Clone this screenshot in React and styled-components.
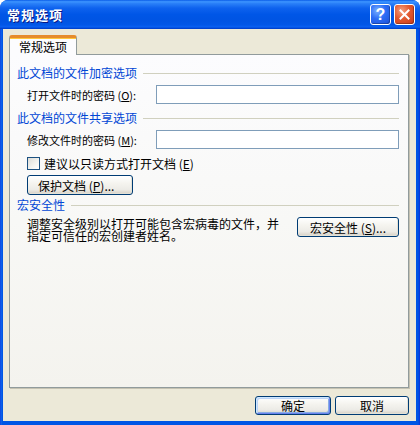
import React from 'react';
import styled, { createGlobalStyle } from 'styled-components';

const GlobalStyle = createGlobalStyle`
  html, body {
    margin: 0;
    padding: 0;
    background: #ffffff;
  }
  body {
    font-family: "Noto Sans CJK SC", "Liberation Sans", sans-serif;
    font-size: 12px;
  }
`;

const Window = styled.div`
  width: 420px;
  height: 425px;
  display: flex;
  flex-direction: column;
  background: linear-gradient(to right, #0831d9 0, #166aee 1px, #0055e5 2px, #0055e5 calc(100% - 2px), #0831d9 100%);
  border-radius: 8px 8px 0 0;
  overflow: hidden;
  box-sizing: border-box;
`;

const TitleBar = styled.div`
  height: 29px;
  flex: 0 0 29px;
  display: flex;
  align-items: center;
  padding: 0 5px 0 7px;
  background: linear-gradient(to bottom, #0a5ce8 0%, #3d95ff 6%, #2a80f8 12%, #0e62ee 28%, #0056e7 50%, #0054e3 72%, #0257e8 86%, #0a61f2 93%, #0047d6 97%, #003dc6 100%);
`;

const Title = styled.div`
  flex: 1;
  color: #ffffff;
  font-weight: bold;
  font-size: 13px;
  letter-spacing: 1px;
  text-shadow: 1px 1px 0 #0a1883;
`;

const CaptionButton = styled.div`
  width: 21px;
  height: 21px;
  box-sizing: border-box;
  border: 1px solid #ffffff;
  border-radius: 3px;
  margin-left: 3px;
  display: flex;
  align-items: center;
  justify-content: center;
  color: #ffffff;
  font-family: "Liberation Sans", sans-serif;
  font-weight: bold;
  font-size: 16px;
  background: ${p => p.$close
    ? 'radial-gradient(circle at 35% 30%, #f5a080 0%, #e2592f 45%, #c4381a 100%)'
    : 'radial-gradient(circle at 35% 30%, #7ab0ff 0%, #2d6df5 45%, #1a4fd6 100%)'};
  box-shadow: inset -1px -1px 0 rgba(0, 0, 0, 0.25);
`;

const Client = styled.div`
  flex: 1;
  margin: 0 4px 4px 3px;
  background: #ece9d8;
  display: flex;
  flex-direction: column;
  padding: 6px 7px 0 6px;
`;

const TabStrip = styled.div`
  display: flex;
  position: relative;
  z-index: 1;
`;

const Tab = styled.div`
  width: 68px;
  height: 20px;
  box-sizing: border-box;
  margin-bottom: -1px;
  padding: 2px 0 0 9px;
  border: 1px solid #919b9c;
  border-bottom: none;
  border-top: 3px solid #e68b2c;
  border-radius: 3px 3px 0 0;
  background: linear-gradient(to bottom, #ffc73c 0, #ffc73c 1px, #fcfcfe 1px);
  color: #000000;
  font-size: 12px;
  line-height: 14px;
`;

const Panel = styled.div`
  height: 334px;
  box-sizing: border-box;
  border: 1px solid #919b9c;
  box-shadow: 1px 1px 0 #c5c2b2;
  background: linear-gradient(to bottom, #fcfcfe 0%, #f8f8f6 50%, #f4f3ee 100%);
  display: flex;
  flex-direction: column;
  padding: 11px 9px 0 7px;
`;

const Group = styled.div`
  display: flex;
  align-items: center;
  height: 14px;
  margin-top: ${p => p.$top || 0}px;
  color: #0046d5;
  font-size: 12px;
  line-height: 14px;

  &::after {
    content: '';
    flex: 1;
    height: 1px;
    margin-left: 6px;
    background: #d0d0bf;
  }
`;

const FieldRow = styled.div`
  display: flex;
  align-items: center;
  margin-top: 5px;
  padding-left: 10px;
`;

const Label = styled.label`
  width: 129px;
  flex: 0 0 129px;
  font-size: 11px;
  color: #000000;
  white-space: nowrap;
`;

const Key = styled.span`
  text-decoration: underline;
`;

const TextBox = styled.div`
  flex: 1;
  height: 19px;
  box-sizing: border-box;
  border: 1px solid #7f9db9;
  background: #ffffff;
`;

const CheckRow = styled.div`
  display: flex;
  align-items: center;
  margin-top: 8px;
  padding-left: 10px;
  height: 13px;
  color: #000000;
`;

const CheckBox = styled.div`
  width: 13px;
  height: 13px;
  box-sizing: border-box;
  border: 1px solid #1c5180;
  background: linear-gradient(135deg, #dcdcd7 0%, #f4f4f0 60%, #ffffff 100%);
  margin-right: 4px;
`;

const Button = styled.div`
  width: ${p => p.$w}px;
  height: ${p => p.$h || 20}px;
  box-sizing: border-box;
  border: 1px solid #003c74;
  border-radius: 3px;
  background: linear-gradient(to bottom, #ffffff 0%, #f5f4ef 40%, #ecebe6 75%, #d6d0c5 100%);
  box-shadow: ${p => p.$default
    ? 'inset 1px 1px 0 #cee7ff, inset -1px -1px 0 #6982ee, inset 2px 2px 0 #bcd4f6, inset -2px -2px 0 #89ade4'
    : 'inset -1px -1px 0 #e3e1d6'};
  display: flex;
  align-items: center;
  justify-content: ${p => (p.$center ? 'center' : 'flex-start')};
  padding-left: ${p => (p.$center ? 0 : 10)}px;
  color: #000000;
  font-size: 12px;
  white-space: nowrap;
`;

const ButtonRow = styled.div`
  margin-top: 5px;
  padding-left: 10px;
`;

const MacroRow = styled.div`
  display: flex;
  align-items: flex-start;
  justify-content: space-between;
  margin-top: 5px;
  padding-left: 10px;
`;

const MacroText = styled.div`
  width: 254px;
  font-size: 12px;
  line-height: 12px;
  padding-top: 1px;
  color: #000000;
`;

const Footer = styled.div`
  display: flex;
  justify-content: flex-end;
  gap: 4px;
  margin-top: 8px;
`;

export default function App() {
  return (
    <>
      <GlobalStyle />
      <Window>
        <TitleBar>
          <Title>常规选项</Title>
          <CaptionButton>?</CaptionButton>
          <CaptionButton $close>
            <svg width="11" height="11" viewBox="0 0 11 11">
              <path d="M1.5 1.5 L9.5 9.5 M9.5 1.5 L1.5 9.5" stroke="#ffffff" strokeWidth="2" strokeLinecap="square" />
            </svg>
          </CaptionButton>
        </TitleBar>
        <Client>
          <TabStrip>
            <Tab>常规选项</Tab>
          </TabStrip>
          <Panel>
            <Group>此文档的文件加密选项</Group>
            <FieldRow>
              <Label>打开文件时的密码 (<Key>O</Key>):</Label>
              <TextBox />
            </FieldRow>
            <Group $top={7}>此文档的文件共享选项</Group>
            <FieldRow>
              <Label>修改文件时的密码 (<Key>M</Key>):</Label>
              <TextBox />
            </FieldRow>
            <CheckRow>
              <CheckBox />
              建议以只读方式打开文档 (<Key>E</Key>)
            </CheckRow>
            <ButtonRow>
              <Button $w={106}>保护文档 (<Key>P</Key>)...</Button>
            </ButtonRow>
            <Group $top={3}>宏安全性</Group>
            <MacroRow>
              <MacroText>调整安全级别以打开可能包含宏病毒的文件，并指定可信任的宏创建者姓名。</MacroText>
              <Button $w={102} $h={20} $center>宏安全性 (<Key>S</Key>)...</Button>
            </MacroRow>
          </Panel>
          <Footer>
            <Button $w={76} $h={19} $center $default>确定</Button>
            <Button $w={74} $h={19} $center>取消</Button>
          </Footer>
        </Client>
      </Window>
    </>
  );
}
